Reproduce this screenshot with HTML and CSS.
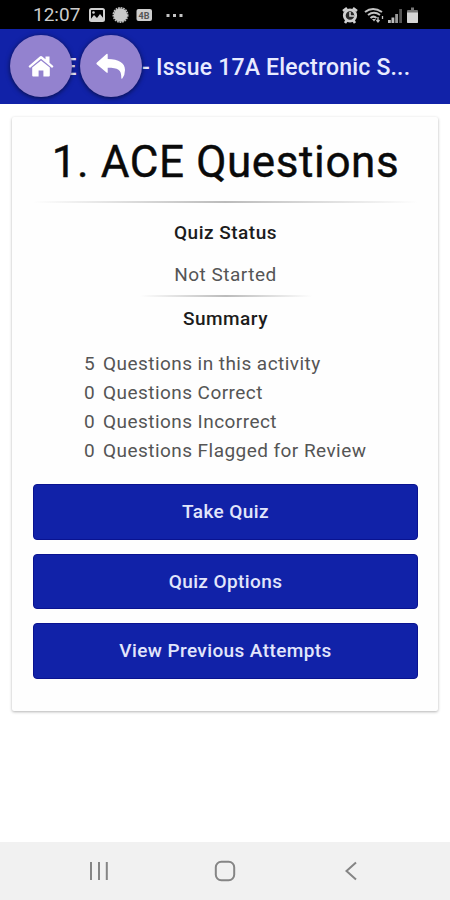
FILE: index.html
```html
<!DOCTYPE html>
<html lang="en">
<head>
    <meta charset="UTF-8">
    <meta name="viewport" content="width=device-width, initial-scale=1.0">
    <title>ACE Questions</title>
    <link rel="stylesheet" href="styles.css">
</head>
<body>
    <div class="status-bar">
        <span class="clock">12:07</span>
        <svg class="status-left" width="98" height="18" viewBox="0 0 98 18">
            <rect x="2" y="3" width="14" height="12" rx="1.5" fill="none" stroke="#d0d0d0" stroke-width="2"/>
            <path d="M2 14l4-5 3 3 3-4 4 5v1H2z" fill="#d0d0d0"/>
            <circle cx="5.5" cy="6.5" r="1.3" fill="#d0d0d0"/>
            <circle cx="32.500" cy="9" r="7.200" fill="none" stroke="#bdbdbd" stroke-width="1.600" stroke-dasharray="1.800 .8"/>
            <circle cx="32.500" cy="9" r="6.800" fill="#c9c9c9"/>
            <rect x="48.500" y="3" width="15.500" height="12" rx="2" fill="#cecece"/>
            <text x="56" y="12.500" text-anchor="middle" class="badge-text">4B</text>
            <g fill="#c4c4c4">
                <rect x="78.500" y="8" width="3" height="3"/>
                <rect x="85" y="8" width="3" height="3"/>
                <rect x="91.500" y="8" width="3" height="3"/>
            </g>
        </svg>
        <svg class="status-right" width="80" height="18" viewBox="0 0 80 18">
            <g fill="none" stroke="#d0d0d0" stroke-width="2">
                <circle cx="9" cy="9.500" r="5.700" fill="#2a2a2a" stroke-width="2.800"/>
                <path d="M2 5l4-3M16 5l-4-3M4 17l2-3M14 17l-2-3" stroke-width="2.600"/>
                <path d="M9 6v4h4" stroke-width="1.600"/>
            </g>
            <g fill="none" stroke="#c4c4c4" stroke-width="2">
                <path d="M24 6c5-4 11-4 17 0M27 9c4-3 8-3 12 0M29.500 12c2-1.800 4-1.800 6 0"/>
            </g>
            <path d="M31 13l2 2.500 2-2.500z" fill="#c4c4c4"/>
            <path d="M37 11v5M35.500 14l1.500 2 1.500-2M41.500 13v-3" stroke="#c4c4c4" stroke-width="1.300" fill="none"/>
            <g fill="#bdbdbd">
                <rect x="47" y="14" width="2.800" height="3"/>
                <rect x="50.500" y="11.500" width="2.800" height="5.500"/>
                <rect x="54.200" y="8" width="2.800" height="9" fill="#999"/>
                <rect x="58.200" y="3" width="2.800" height="14" fill="#555"/>
            </g>
            <path d="M70 1.500h3V4h3q1 0 1 1v11q0 1-1 1h-9q-1 0-1-1V5q0-1 1-1h3z" fill="#777"/>
            <path d="M66 6.500h11V16q0 1-1 1h-9q-1 0-1-1z" fill="#d6d6d6"/>
        </svg>
    </div>

    <header class="header">
        <h1 class="header-title"><span class="course">ACE</span><span>- Issue 17A Electronic S...</span></h1>
        <div class="nav-buttons">
            <a href="#" class="round-btn" aria-label="Home">
                <svg width="28" height="24" viewBox="0 0 28 24" fill="#fff">
                    <path d="M14 6.500L5.200 13.600V21.500q0 1 1 1h5.400v-6h4.800v6h5.400q1 0 1-1v-7.900z"/>
                    <path d="M1.500 12.300L12.500 2.700q1.500-1.200 3 0L18.500 5.200V2.500h4v6.200l4 3.600-1.400 1.700L14 4.800 2.900 14z"/>
                </svg>
            </a>
            <a href="#" class="round-btn" aria-label="Back">
                <svg width="30" height="27" viewBox="0 0 30 27" fill="#fff">
                    <path d="M.7 9.800L10.500 1q1.200-.8 1.200.7V6C23 6 29 10 29 17q0 5-2.700 8.500-1 .7-1-.5C25.500 16.500 22 14.700 11.700 14.700V19q0 1.500-1.200.6L.7 11.200q-.7-.7 0-1.400z"/>
                </svg>
            </a>
        </div>
    </header>

    <main class="container">
        <section class="card">
            <h2 class="quiz-title">1. ACE Questions</h2>
            <div class="divider"></div>
            <h3 class="label">Quiz Status</h3>
            <p class="status">Not Started</p>
            <div class="divider divider-short"></div>
            <h3 class="label summary-label">Summary</h3>
            <ul class="summary">
                <li><span class="count">5</span><span>Questions in this activity</span></li>
                <li><span class="count">0</span><span>Questions Correct</span></li>
                <li><span class="count">0</span><span>Questions Incorrect</span></li>
                <li><span class="count">0</span><span>Questions Flagged for Review</span></li>
            </ul>
            <div class="actions">
                <button class="btn">Take Quiz</button>
                <button class="btn">Quiz Options</button>
                <button class="btn">View Previous Attempts</button>
            </div>
        </section>
    </main>

    <nav class="system-nav">
        <svg width="20" height="20" viewBox="0 0 20 20">
            <path d="M2 1v18M10 1v18M17.800 1v18" stroke="#858585" stroke-width="2"/>
        </svg>
        <svg width="22" height="22" viewBox="0 0 22 22">
            <rect x="1.800" y="1.800" width="18.400" height="18.400" rx="5.500" fill="none" stroke="#858585" stroke-width="2"/>
        </svg>
        <svg width="20" height="20" viewBox="0 0 20 20">
            <path d="M15 1.500L5.500 10l9.500 8.500" fill="none" stroke="#858585" stroke-width="2"/>
        </svg>
    </nav>
</body>
</html>
```
FILE: styles.css
```css
* {
    margin: 0;
    padding: 0;
    box-sizing: border-box;
}
body {
    font-family: Roboto, sans-serif;
    background-color: #fff;
    color: #555;
    height: 900px;
    display: flex;
    flex-direction: column;
    overflow: hidden;
}
.status-bar {
    height: 29px;
    background-color: #000;
    display: flex;
    align-items: center;
    padding: 0 29px 0 33px;
}
.clock {
    width: 55px;
    font-size: 19px;
    color: #ccc;
    white-space: nowrap;
}
.status-right {
    margin-left: auto;
}
.badge-text {
    font-size: 9px;
    font-weight: bold;
    fill: #555;
}
.header {
    position: relative;
    height: 75px;
    background-color: #1122a8;
    display: flex;
    align-items: center;
    padding: 1px 0 0 33px;
}
.header-title {
    display: flex;
    font-size: 23px;
    font-weight: 500;
    letter-spacing: 0.2px;
    color: #e8ebff;
    white-space: nowrap;
}
.course {
    width: 109px;
}
/* floating buttons cover the start of the title */
.nav-buttons {
    position: absolute;
    top: 6px;
    left: 10px;
    display: flex;
    gap: 8px;
}
.round-btn {
    width: 62px;
    height: 62px;
    border-radius: 50%;
    background-color: #9382cf;
    box-shadow: 0 1px 5px rgba(0,0,0,0.6);
    display: flex;
    align-items: center;
    justify-content: center;
}
.container {
    flex: 1;
    padding: 13px 12px;
}
.card {
    height: 594px;
    padding: 17px 20px 0 21px;
    background-color: #fefefe;
    border-radius: 2px;
    box-shadow: 0 1px 3px rgba(0,0,0,0.3);
    text-align: center;
}
.quiz-title {
    font-size: 44px;
    font-weight: 400;
    line-height: 56px;
    letter-spacing: 0.6px;
    color: #0a0a0a;
    -webkit-text-stroke: 0.4px #0a0a0a;
    white-space: nowrap;
}
.divider {
    height: 2px;
    margin-top: 11px;
    background: linear-gradient(to right, transparent, #bbb, transparent);
}
.label {
    margin-top: 18px;
    font-size: 19px;
    font-weight: 500;
    line-height: 24px;
    letter-spacing: 0.5px;
    color: #1c1c1c;
}
.status {
    margin-top: 18px;
    font-size: 19px;
    line-height: 24px;
    letter-spacing: 0.5px;
}
.divider-short {
    width: 172px;
    margin: 8px auto 0;
}
.summary-label {
    margin-top: 10px;
}
.summary {
    width: 290px;
    margin: 18px 0 0 51px;
    list-style: none;
    text-align: left;
    font-size: 19px;
    line-height: 29px;
    letter-spacing: 0.45px;
}
.summary li {
    display: flex;
    white-space: nowrap;
}
.count {
    width: 19px;
}
.actions {
    display: flex;
    flex-direction: column;
    gap: 14px;
    margin-top: 19px;
}
.btn {
    height: 55.6px;
    border: 1px solid #0a1390;
    border-radius: 4px;
    background-color: #1122a8;
    color: #e2e6fb;
    font-family: inherit;
    font-size: 19px;
    font-weight: 500;
    letter-spacing: 0.4px;
    cursor: pointer;
}
.system-nav {
    height: 58px;
    background-color: #f1f1f1;
    display: flex;
    align-items: center;
    justify-content: space-between;
    padding: 0 89px;
}
```
